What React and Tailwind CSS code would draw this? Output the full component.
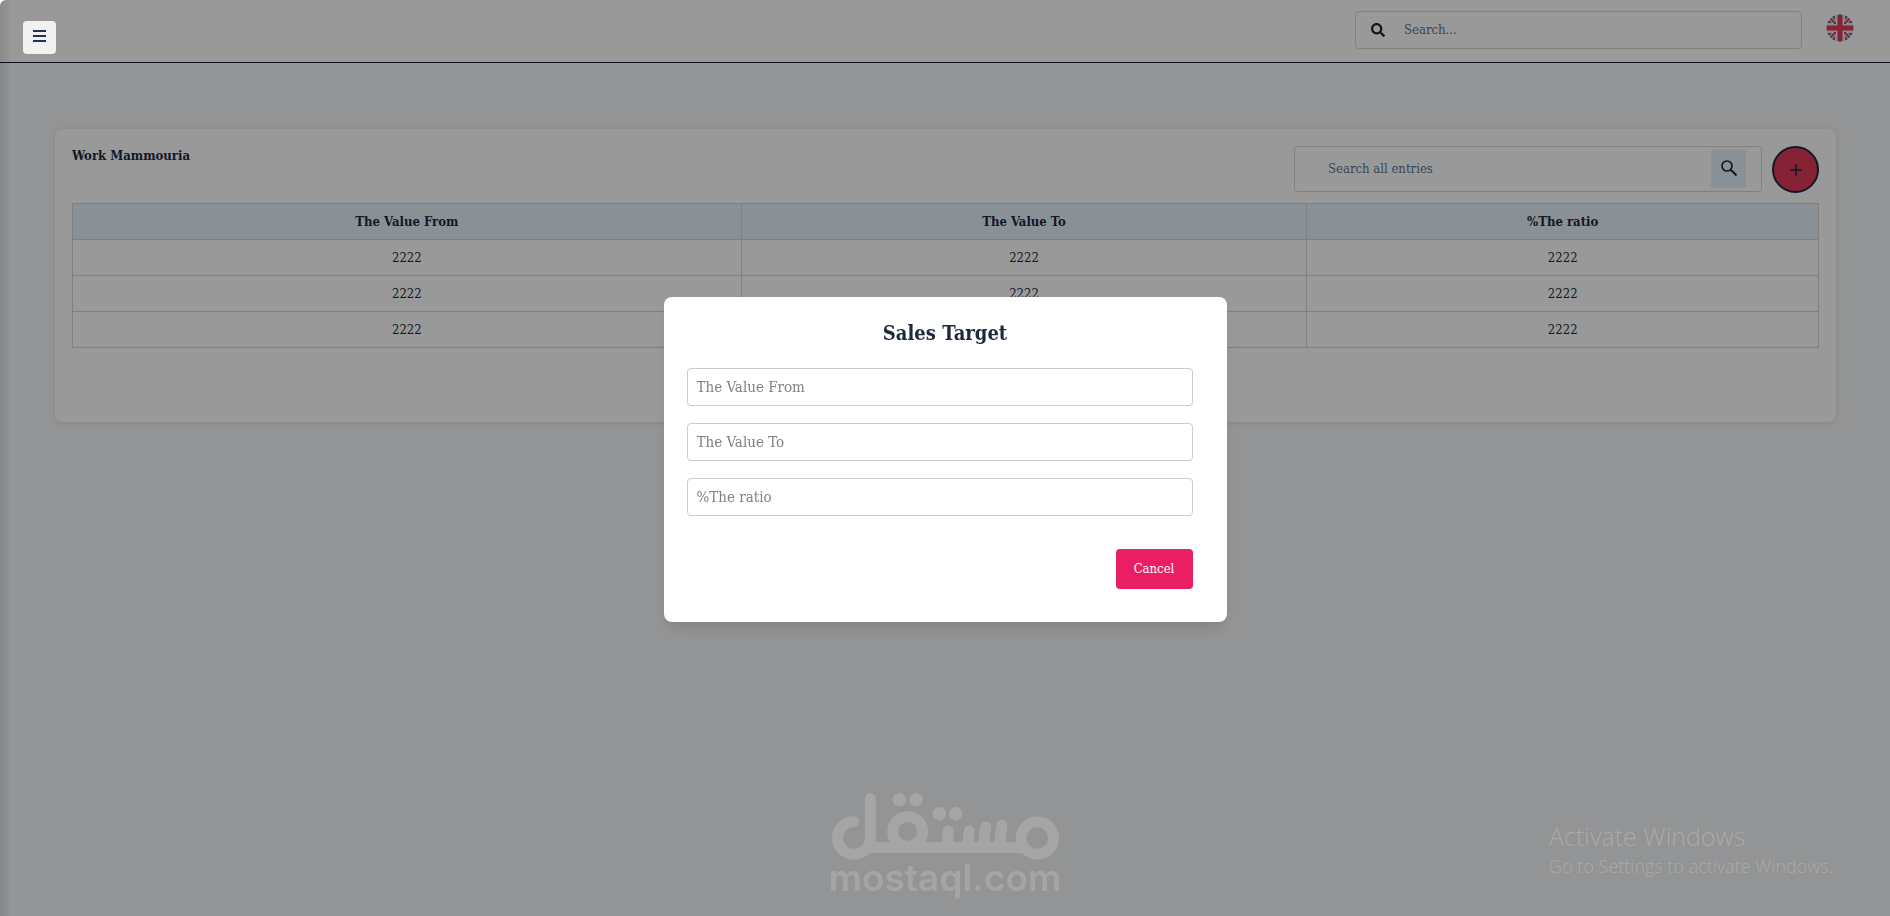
import React, { useState } from 'react';
import { FaSearch } from 'react-icons/fa';
import { MdAdd } from 'react-icons/md';

const columns = [
  { key: 'from', label: 'The Value From', width: 'w-[38.3%]' },
  { key: 'to', label: 'The Value To', width: 'w-[32.4%]' },
  { key: 'ratio', label: '%The ratio', width: 'w-[29.3%]' },
];

const rows = [
  { from: '2222', to: '2222', ratio: '2222' },
  { from: '2222', to: '2222', ratio: '2222' },
  { from: '2222', to: '2222', ratio: '2222' },
];

const FlagIcon = () => (
  <svg viewBox="0 0 28 28" className="w-7 h-7" aria-hidden="true">
    <defs>
      <clipPath id="flag-circle"><circle cx="14" cy="14" r="13.5" /></clipPath>
    </defs>
    <g clipPath="url(#flag-circle)">
      <rect width="28" height="28" fill="#e6e6e6" />
      <path d="M9 0v6L3 0zM0 3l6 6H0zM19 0v6l6-6zM28 3l-6 6h6zM9 28v-6l-6 6zM0 25l6-6H0zM19 28v-6l6 6zM28 25l-6-6h6z" fill="#52719c" />
      <path d="M3 3l7 7M25 3l-7 7M3 25l7-7M25 25l-7-7" stroke="#dc3a5c" strokeWidth="2" />
      <path d="M14 0v28M0 14h28" stroke="#e6e6e6" strokeWidth="8" />
      <path d="M14 0v28M0 14h28" stroke="#dc3a5c" strokeWidth="5" />
    </g>
  </svg>
);

const Header = () => (
  <header className="flex h-[63px] items-start justify-between rounded-tl-md border-b border-slate-900 bg-white pl-[23px] pr-9">
    <button
      type="button"
      aria-label="Toggle menu"
      className="relative z-20 mt-[21px] flex h-[33px] w-[33px] items-start justify-center rounded-sm bg-[#f1f1f1] pt-[9px]"
    >
      <svg viewBox="0 0 13 12" className="h-3 w-[13px]" fill="#24344f">
        <path d="M0 0h13v2H0zM0 5h13v2H0zM0 10h13v2H0z" />
      </svg>
    </button>
    <div className="flex items-start gap-6">
      <label className="mt-[11px] flex h-[38px] w-[447px] items-center rounded border border-[#d5d5d5] px-[15px]">
        <FaSearch className="h-[14px] w-[14px] text-slate-800" />
        <input
          type="text"
          aria-label="Search"
          placeholder="Search..."
          className="ml-[19px] flex-1 text-[13px] outline-none placeholder:text-[#607696]"
        />
      </label>
      <button type="button" aria-label="Change language" className="mt-[14px]">
        <FlagIcon />
      </button>
    </div>
  </header>
);

const TargetsCard = ({ onAdd }) => (
  <section className="rounded-lg bg-white p-[17px] pb-[74px] shadow-[0_1px_6px_rgba(0,0,0,0.1)]">
    <div className="mb-[10px] flex items-start justify-between">
      <h1 className="text-[13px] font-bold leading-5">Work Mammouria</h1>
      <div className="flex items-start gap-[10px]">
        <div className="flex h-[46px] w-[468px] items-center rounded border border-[#d5d5d5] pl-[33px] pr-[15px]">
          <input
            type="text"
            aria-label="Search all entries"
            placeholder="Search all entries"
            className="flex-1 text-[13px] outline-none placeholder:text-[#607696]"
          />
          <button type="button" aria-label="Search" className="flex h-[38px] w-[35px] items-start justify-center bg-[#e6f2fb] pt-[10px]">
            <svg viewBox="0 0 16 16" className="h-4 w-4" fill="none" stroke="currentColor" strokeWidth="1.7">
              <circle cx="6" cy="6" r="5" />
              <path d="M9.5 9.5l6 6" strokeWidth="2" />
            </svg>
          </button>
        </div>
        <button
          type="button"
          aria-label="Add target"
          onClick={onAdd}
          className="flex h-[47px] w-[47px] items-center justify-center rounded-full border-2 border-slate-800 bg-[#de395a]"
        >
          <MdAdd className="h-5 w-5" />
        </button>
      </div>
    </div>
    <table className="w-full table-fixed border-collapse text-center text-[13px]">
      <thead className="bg-[#e6f2fb]">
        <tr className="h-9">
          {columns.map((col) => (
            <th key={col.key} className={`${col.width} border border-[#d5d5d5] font-bold`}>{col.label}</th>
          ))}
        </tr>
      </thead>
      <tbody>
        {rows.map((row, index) => (
          <tr key={index} className="h-9">
            {columns.map((col) => (
              <td key={col.key} className="border border-[#d5d5d5]">{row[col.key]}</td>
            ))}
          </tr>
        ))}
      </tbody>
    </table>
  </section>
);

const SalesTargetModal = ({ onCancel }) => (
  <div className="fixed inset-0 z-10 flex items-center justify-center rounded-tl-md bg-black/40 pt-[3px]">
    <form
      role="dialog"
      aria-labelledby="modal-title"
      className="w-[563px] rounded-lg bg-white pb-[33px] pl-[23px] pr-[34px] pt-[23px] shadow-lg"
    >
      <h2 id="modal-title" className="mb-[22px] pl-[11px] text-center text-[20px] font-bold leading-[26px]">Sales Target</h2>
      <div className="flex flex-col gap-[17px]">
        {columns.map((col) => (
          <input
            key={col.key}
            type="text"
            name={col.key}
            aria-label={col.label}
            placeholder={col.label}
            className="h-[38px] w-full rounded border border-[#ccc] px-[9px] text-[15px] outline-none placeholder:text-[#808080]"
          />
        ))}
      </div>
      <div className="mt-[33px] flex justify-end">
        <button type="button" onClick={onCancel} className="h-10 w-[77px] rounded bg-[#e91e63] text-[13px] text-white">
          Cancel
        </button>
      </div>
    </form>
  </div>
);

const MostaqlMark = () => (
  <div className="pointer-events-none fixed inset-x-0 bottom-4 z-30 flex flex-col items-center text-[#a5a5a5]">
    <svg viewBox="0 0 227 67" className="h-[67px] w-[227px]" fill="none" stroke="currentColor" strokeWidth="11" strokeLinecap="round">
      <path d="M21.5 28.5A16.4 16.4 0 1 0 38.3 45V5.5" />
      <path d="M36 54.5H195" strokeLinecap="butt" />
      <circle cx="75.7" cy="38.4" r="15" />
      <circle cx="205.3" cy="45" r="16.2" />
      <path d="M116.3 38L115 54M137.3 38L135 54M153.7 34L151 54M170 32L167 54" />
      <g fill="currentColor" stroke="none">
        <circle cx="67.3" cy="6.8" r="6.8" />
        <circle cx="84" cy="6.8" r="6.8" />
        <circle cx="107.3" cy="20.7" r="6.8" />
        <circle cx="123.7" cy="20.7" r="6.8" />
      </g>
    </svg>
    <span className="pb-1 font-['Inter'] text-[37px] font-semibold leading-9">mostaql.com</span>
  </div>
);

const ActivateNotice = () => (
  <div className="pointer-events-none fixed bottom-9 right-[57px] z-30 font-['Open_Sans'] font-light text-[#a9aaab]">
    <p className="text-[25px] leading-8">Activate Windows</p>
    <p className="text-[18px] leading-7">Go to Settings to activate Windows.</p>
  </div>
);

const App = () => {
  const [open, setOpen] = useState(true);

  return (
    <div className="flex min-h-screen flex-col rounded-tl-md bg-[#f7f9fb] font-['DejaVu_Serif_Condensed','DejaVu_Serif',serif] text-slate-800">
      <Header />
      {/* shadow of the collapsed sidebar */}
      <div className="fixed inset-y-0 left-0 w-3 rounded-tl-md bg-linear-to-r from-black/10 to-transparent" />
      <main className="flex flex-1 flex-col pl-[33px] pr-8 pt-11">
        <div className="flex-1 bg-[#f6f7f8] px-[22px] pt-[22px]">
          <TargetsCard onAdd={() => setOpen(true)} />
        </div>
      </main>
      {open && <SalesTargetModal onCancel={() => setOpen(false)} />}
      <MostaqlMark />
      <ActivateNotice />
    </div>
  );
};

export default App;
